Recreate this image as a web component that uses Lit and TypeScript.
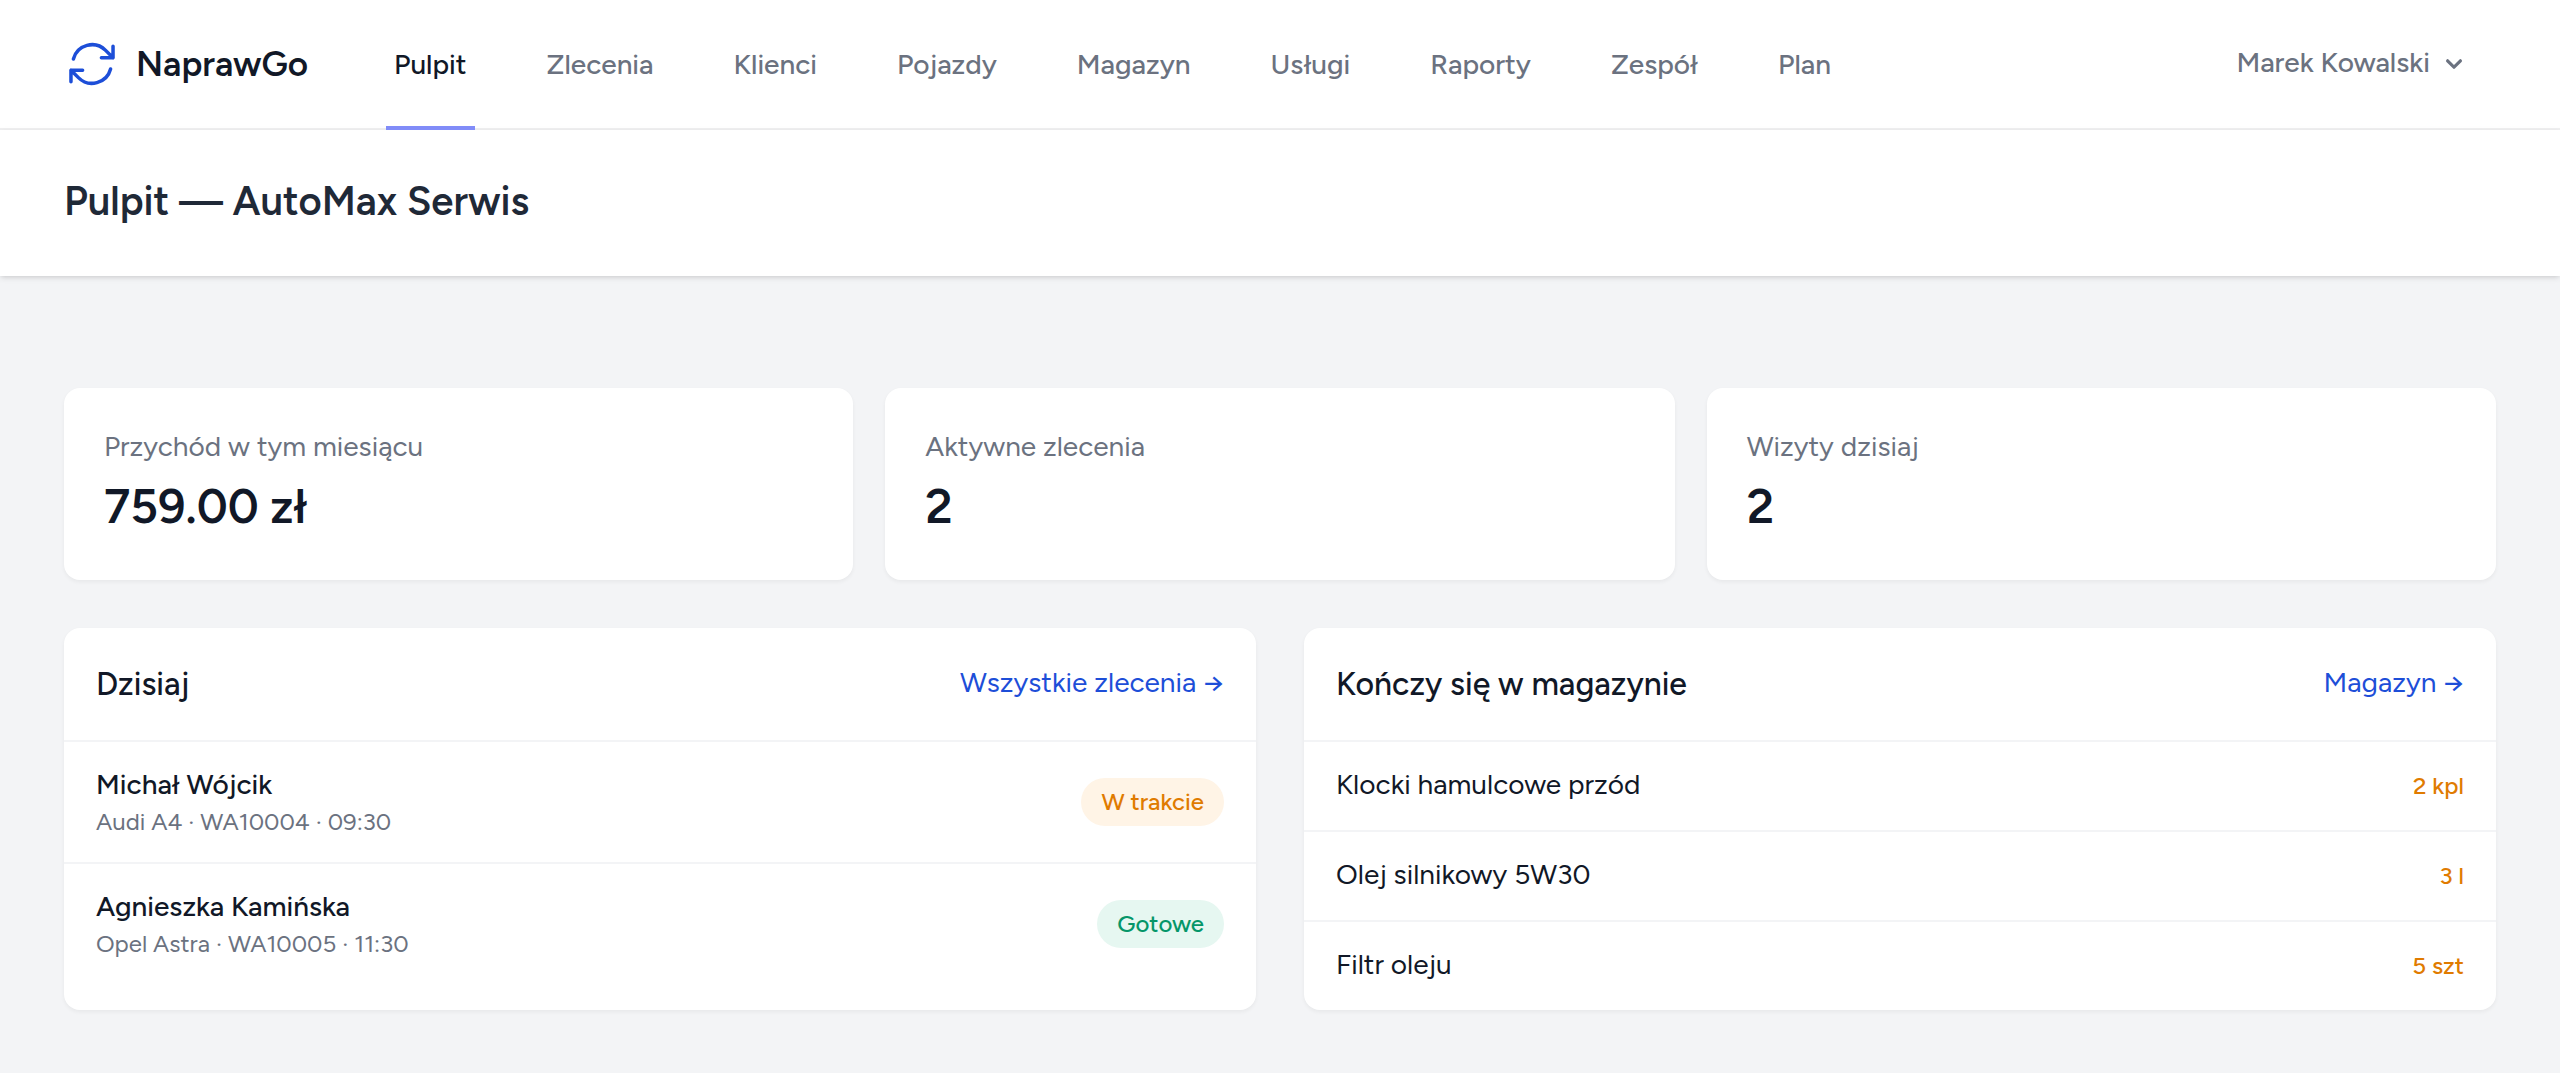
import { LitElement, html, css, svg } from "lit";
import { customElement, state } from "lit/decorators.js";
import { classMap } from "lit/directives/class-map.js";

interface Visit {
  client: string;
  details: string;
  status: string;
  done: boolean;
}

const NAV = ["Pulpit", "Zlecenia", "Klienci", "Pojazdy", "Magazyn", "Usługi", "Raporty", "Zespół", "Plan"];

const STATS = [
  { label: "Przychód w tym miesiącu", value: "759.00 zł" },
  { label: "Aktywne zlecenia", value: "2" },
  { label: "Wizyty dzisiaj", value: "2" },
];

const VISITS: Visit[] = [
  { client: "Michał Wójcik", details: "Audi A4 · WA10004 · 09:30", status: "W trakcie", done: false },
  { client: "Agnieszka Kamińska", details: "Opel Astra · WA10005 · 11:30", status: "Gotowe", done: true },
];

const STOCK = [
  { name: "Klocki hamulcowe przód", quantity: "2 kpl" },
  { name: "Olej silnikowy 5W30", quantity: "3 l" },
  { name: "Filtr oleju", quantity: "5 szt" },
];

const cyclePaths = svg`<path
  d="M16.023 9.348h4.992v-.001M2.985 19.644v-4.992m0 0h4.992m-4.993 0 3.181 3.183a8.25 8.25 0 0 0 13.803-3.7M4.031 9.865a8.25 8.25 0 0 1 13.803-3.7l3.181 3.182m0-4.991v4.99"
  fill="none" stroke="currentColor" stroke-width="1.5" stroke-linecap="round" stroke-linejoin="round"/>`;

const chevronPath = svg`<path fill="currentColor" fill-rule="evenodd" clip-rule="evenodd"
  d="M5.293 7.293a1 1 0 011.414 0L10 10.586l3.293-3.293a1 1 0 111.414 1.414l-4 4a1 1 0 01-1.414 0l-4-4a1 1 0 010-1.414z"/>`;

@customElement("app-root")
export class AppRoot extends LitElement {
  @state() private current = "Pulpit";

  static styles = css`
    :host {
      display: block;
      min-height: 100vh;
      background: #f3f4f6;
      color: #111827;
      font-family: Figtree, "Open Sans", sans-serif;
      font-size: 28px;
      line-height: 40px;
    }
    *, *::before, *::after { box-sizing: border-box; }
    h1, h2, p, ul, dl, dd { margin: 0; padding: 0; }
    ul { list-style: none; }
    a { color: inherit; text-decoration: none; }

    .topbar {
      display: flex;
      min-height: 130px;
      padding: 0 64px;
      background: #fff;
      border-bottom: 2px solid #f0f0f1;
    }
    .brand {
      display: flex;
      align-items: center;
      gap: 16px;
      margin-right: 78px;
      font-size: 35px;
      font-weight: 600;
    }
    .brand-icon { width: 56px; height: 56px; color: #1d4ed8; }
    .menu { display: flex; gap: 64px; }
    .menu li { display: flex; }
    .menu-link {
      display: flex;
      align-items: center;
      margin-bottom: -2px;
      padding: 2px 8px 0;
      border-bottom: 4px solid transparent;
      color: #6b7280;
      font-weight: 500;
    }
    .menu-link.active { color: #111827; border-color: #818cf8; }
    .user {
      display: flex;
      align-items: center;
      gap: 8px;
      margin-left: auto;
      padding: 0 26px;
      border: 0;
      background: none;
      color: #6b7280;
      font: inherit;
      font-weight: 500;
      cursor: pointer;
    }
    .user-name { padding-bottom: 4px; }
    .chevron { width: 32px; height: 32px; }

    .heading {
      padding: 46px 64px 50px;
      background: #fff;
      box-shadow: 0 2px 6px rgb(0 0 0 / 0.1), 0 2px 4px -2px rgb(0 0 0 / 0.1);
    }
    .title { color: #1f2937; font-size: 40px; font-weight: 600; line-height: 50px; }

    .content {
      display: flex;
      flex-direction: column;
      gap: 48px;
      padding: 112px 64px 48px;
    }
    .stats { display: grid; grid-template-columns: repeat(3, 1fr); gap: 32px; }
    .panels { display: grid; grid-template-columns: repeat(2, 1fr); gap: 48px; }
    .card {
      min-width: 0;
      background: #fff;
      border-radius: 16px;
      box-shadow: 0 2px 4px rgb(0 0 0 / 0.05);
    }
    .stat { padding: 38px 40px 42px; }
    .stat-label { color: #6b7280; }
    .stat-value { margin-top: 8px; font-size: 48px; font-weight: 600; line-height: 64px; }

    .panel-head, .row {
      display: flex;
      align-items: center;
      justify-content: space-between;
      gap: 32px;
    }
    .panel-head { padding: 32px; border-bottom: 2px solid #f3f4f6; }
    .panel-title { font-size: 32px; font-weight: 500; line-height: 48px; }
    .more, .client, .part { padding-bottom: 4px; line-height: 36px; }
    .more { color: #1d4ed8; }
    .row { padding: 24px 32px; }
    .row + .row { border-top: 2px solid #f3f4f6; }
    .client { font-weight: 500; }
    .details { color: #6b7280; font-size: 24px; line-height: 32px; }
    .badge {
      padding: 8px 20px;
      border-radius: 24px;
      background: #fff4e6;
      color: #e07b00;
      font-size: 24px;
      font-weight: 500;
      line-height: 32px;
    }
    .badge.done { background: #e6f7f1; color: #059669; }
    .quantity { color: #e07b00; font-size: 24px; font-weight: 500; }

    @media (max-width: 1900px) {
      .topbar { flex-wrap: wrap; }
      .menu { flex-wrap: wrap; gap: 16px 32px; min-height: 80px; }
      .stats, .panels { grid-template-columns: 1fr; }
    }
  `;

  private select(event: Event, item: string) {
    event.preventDefault();
    this.current = item;
  }

  render() {
    return html`
      <header>
        <nav class="topbar">
          <a class="brand" href="#pulpit">
            <svg class="brand-icon" viewBox="0 0 24 24" aria-hidden="true">${cyclePaths}</svg>
            <span>NaprawGo</span>
          </a>
          <ul class="menu">
            ${NAV.map((item) => html`
              <li>
                <a
                  class=${classMap({ "menu-link": true, active: item === this.current })}
                  href="#${item.toLowerCase()}"
                  @click=${(event: Event) => this.select(event, item)}
                >${item}</a>
              </li>`)}
          </ul>
          <button class="user" type="button">
            <span class="user-name">Marek Kowalski</span>
            <svg class="chevron" viewBox="0 0 20 20" aria-hidden="true">${chevronPath}</svg>
          </button>
        </nav>
        <div class="heading"><h1 class="title">Pulpit — AutoMax Serwis</h1></div>
      </header>
      <main class="content">
        <dl class="stats">
          ${STATS.map((stat) => html`
            <div class="card stat">
              <dt class="stat-label">${stat.label}</dt>
              <dd class="stat-value">${stat.value}</dd>
            </div>`)}
        </dl>
        <div class="panels">
          <section class="card">
            <div class="panel-head">
              <h2 class="panel-title">Dzisiaj</h2>
              <a class="more" href="#zlecenia">Wszystkie zlecenia →</a>
            </div>
            <ul>
              ${VISITS.map((visit) => html`
                <li class="row">
                  <div>
                    <p class="client">${visit.client}</p>
                    <p class="details">${visit.details}</p>
                  </div>
                  <span class=${classMap({ badge: true, done: visit.done })}>${visit.status}</span>
                </li>`)}
            </ul>
          </section>
          <section class="card">
            <div class="panel-head">
              <h2 class="panel-title">Kończy się w magazynie</h2>
              <a class="more" href="#magazyn">Magazyn →</a>
            </div>
            <ul>
              ${STOCK.map((part) => html`
                <li class="row">
                  <span class="part">${part.name}</span>
                  <span class="quantity">${part.quantity}</span>
                </li>`)}
            </ul>
          </section>
        </div>
      </main>
    `;
  }
}
